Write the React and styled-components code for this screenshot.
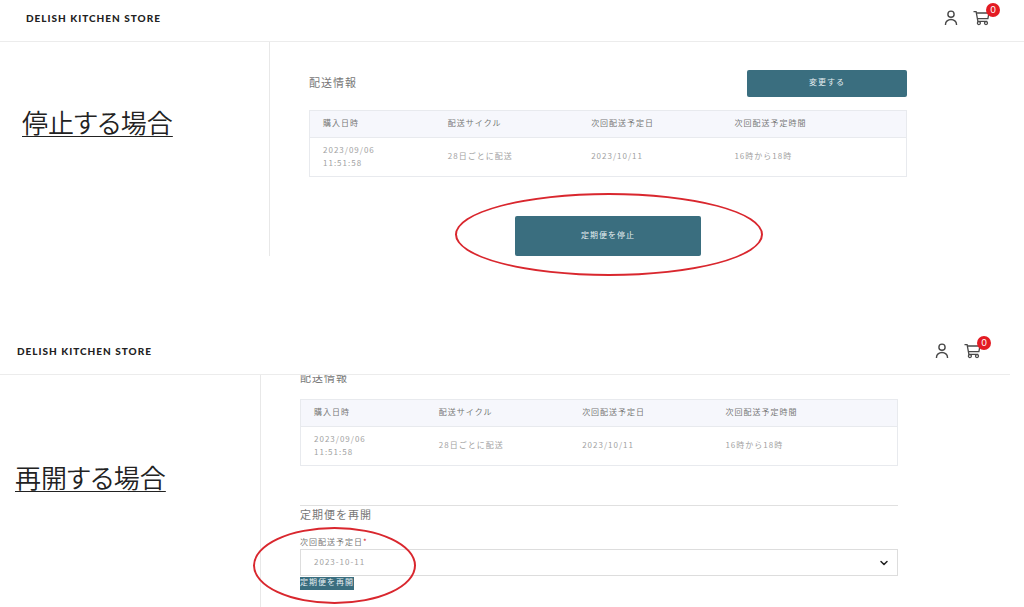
import React from 'react'
import styled, { createGlobalStyle } from 'styled-components'
import { ChevronDown } from 'lucide-react'

const GlobalStyle = createGlobalStyle`
  * {
    box-sizing: border-box;
  }

  body {
    margin: 0;
    background: #fff;
    color: #777;
    font-family: "Noto Sans CJK JP", sans-serif;
    font-size: 8px;
    letter-spacing: 1px;
  }
`

const Panel = styled.section`
  margin: ${({ $shifted }) => ($shifted ? '77px 14px 0 0' : '0')};
`

const Header = styled.header`
  display: flex;
  align-items: flex-start;
  justify-content: space-between;
  height: 42px;
  padding: ${({ $shifted }) => ($shifted ? '0 19px 0 17px' : '0 24px 0 26px')};
  border-bottom: 1px solid #ececec;
`

const Logo = styled.a`
  color: #222;
  font-family: Lato, sans-serif;
  font-size: 10px;
  font-weight: 900;
  line-height: 36px;
  text-decoration: none;
`

const Icons = styled.div`
  display: flex;
  gap: 14px;
  padding-top: 9px;
`

const IconButton = styled.button`
  position: relative;
  display: flex;
  width: ${({ $wide }) => ($wide ? '27px' : '16px')};
  padding: 0;
  border: 0;
  background: none;
  color: #484848;
`

const Badge = styled.span`
  position: absolute;
  top: -6px;
  right: 0;
  width: 14px;
  height: 14px;
  border-radius: 50%;
  background: #e31b23;
  color: #fff;
  font-family: Lato, sans-serif;
  font-size: 9px;
  letter-spacing: 0;
  line-height: 14px;
  text-align: center;
`

const Body = styled.div`
  display: flex;
`

const Side = styled.aside`
  flex: none;
  width: ${({ $shifted }) => ($shifted ? '261px' : '270px')};
  padding: ${({ $shifted }) => ($shifted ? '82px 0 0 15px' : '60px 0 0 22px')};
  border-right: 1px solid #e8e8e8;
`

const Caption = styled.h1`
  margin: 0;
  color: #222;
  font-size: 26px;
  font-weight: 350;
  font-feature-settings: "palt";
  letter-spacing: 0;
  line-height: 40px;
  text-decoration: underline;
  text-decoration-thickness: 1px;
  text-underline-offset: 3px;
`

const Main = styled.main`
  flex: 1;
  padding: ${({ $shifted }) => ($shifted ? '0 112px 18px 39px' : '28px 117px 0 39px')};
`

const TitleRow = styled.div`
  display: flex;
  align-items: flex-start;
  justify-content: space-between;
  margin-bottom: 13px;
`

/* the heading is scrolled halfway under the header */
const ScrolledRow = styled.div`
  display: flex;
  align-items: flex-end;
  height: 10px;
  margin-bottom: 14px;
  overflow: hidden;
`

const Title = styled.h2`
  margin: 0;
  color: #777;
  font-size: 11px;
  font-weight: 400;
  line-height: ${({ $tall }) => ($tall ? '24px' : '16px')};
`

const Button = styled.button`
  width: ${({ $size }) => ({ medium: '160px', large: '186px' })[$size] || 'auto'};
  height: ${({ $size }) => ({ medium: '27px', large: '40px' })[$size] || '13px'};
  padding: 0 0 3px;
  border: 0;
  border-radius: ${({ $size }) => ($size ? '2px' : '0')};
  background: #3a6e7f;
  color: #e4edef;
  font: inherit;
  letter-spacing: inherit;
  line-height: 10px;
`

const Table = styled.table`
  width: 100%;
  border: 1px solid #e8eaee;
  border-collapse: collapse;
  table-layout: fixed;
  text-align: left;

  th,
  td {
    padding: 0 13px 3px;
    line-height: 13px;
  }

  th {
    height: 27px;
    border-bottom: 1px solid #e8eaee;
    background: #f6f7fc;
    color: #777;
    font-weight: 400;
  }

  td {
    height: 39px;
    color: #a2a2a2;
  }
`

const Column = styled.col`
  width: ${({ $width }) => $width};
`

const StopArea = styled.div`
  display: flex;
  justify-content: center;
  margin-top: 39px;
`

const Marked = styled.div`
  position: relative;
`

const Ellipse = styled.span`
  position: absolute;
  top: ${({ $top }) => $top};
  left: ${({ $left }) => $left};
  width: ${({ $width }) => $width};
  height: ${({ $height }) => $height};
  border: 2px solid #d9272e;
  border-radius: 50%;
  pointer-events: none;
`

const Restart = styled.form`
  margin-top: 39px;
  border-top: 1px solid #e0e0e0;
`

const Field = styled.div`
  position: relative;
  margin-top: 13px;
`

const Label = styled.label`
  display: block;
  line-height: 14px;

  span {
    color: #d9272e;
  }
`

const SelectBox = styled.div`
  display: grid;
  align-items: center;

  > * {
    grid-area: 1 / 1;
  }

  svg {
    justify-self: end;
    margin-right: 8px;
    color: #222;
    pointer-events: none;
  }
`

const Select = styled.select`
  width: 100%;
  height: 27px;
  padding: 0 13px 3px;
  border: 1px solid #ddd;
  border-radius: 0;
  appearance: none;
  background: #fff;
  color: #a2a2a2;
  font: inherit;
  letter-spacing: inherit;
`

function UserIcon() {
  return (
    <svg width="16" height="18" viewBox="0 0 16 18" fill="none" stroke="currentColor" strokeWidth="1.4">
      <circle cx="8" cy="5.2" r="3.1" />
      <path d="M2.5 16v-.8a5.5 4.7 0 0 1 11 0v.8" />
    </svg>
  )
}

function CartIcon() {
  return (
    <svg width="18" height="18" viewBox="0 0 18 18" fill="none" stroke="currentColor" strokeWidth="1.3">
      <path d="M.5 2.6h2.6l1.8 9.8h9.3" />
      <path d="M3.5 4h12.4l-1 5.6H4.5" />
      <circle cx="5.9" cy="14.1" r="1.5" />
      <circle cx="13" cy="14.1" r="1.5" />
    </svg>
  )
}

function StoreHeader({ shifted }) {
  return (
    <Header $shifted={shifted}>
      <Logo href="#">DELISH KITCHEN STORE</Logo>
      <Icons>
        <IconButton type="button" aria-label="アカウント">
          <UserIcon />
        </IconButton>
        <IconButton type="button" aria-label="カート" $wide>
          <CartIcon />
          <Badge>0</Badge>
        </IconButton>
      </Icons>
    </Header>
  )
}

function DeliveryTable() {
  return (
    <Table>
      <colgroup>
        <Column $width="21%" />
        <Column $width="24%" />
        <Column $width="24%" />
        <Column $width="31%" />
      </colgroup>
      <thead>
        <tr>
          <th>購入日時</th>
          <th>配送サイクル</th>
          <th>次回配送予定日</th>
          <th>次回配送予定時間</th>
        </tr>
      </thead>
      <tbody>
        <tr>
          <td>
            2023/09/06
            <br />
            11:51:58
          </td>
          <td>28日ごとに配送</td>
          <td>2023/10/11</td>
          <td>16時から18時</td>
        </tr>
      </tbody>
    </Table>
  )
}

function App() {
  return (
    <>
      <GlobalStyle />
      <Panel>
        <StoreHeader />
        <Body>
          <Side>
            <Caption>停止する場合</Caption>
          </Side>
          <Main>
            <TitleRow>
              <Title $tall>配送情報</Title>
              <Button type="button" $size="medium">変更する</Button>
            </TitleRow>
            <DeliveryTable />
            <StopArea>
              <Marked>
                <Button type="button" $size="large">定期便を停止</Button>
                <Ellipse $top="-23px" $left="-60px" $width="308px" $height="83px" />
              </Marked>
            </StopArea>
          </Main>
        </Body>
      </Panel>

      <Panel $shifted>
        <StoreHeader shifted />
        <Body>
          <Side $shifted>
            <Caption>再開する場合</Caption>
          </Side>
          <Main $shifted>
            <ScrolledRow>
              <Title>配送情報</Title>
            </ScrolledRow>
            <DeliveryTable />
            <Restart>
              <Title>定期便を再開</Title>
              <Field>
                <Label htmlFor="next-date">
                  次回配送予定日<span>*</span>
                </Label>
                <SelectBox>
                  <Select id="next-date" defaultValue="2023-10-11">
                    <option>2023-10-11</option>
                  </Select>
                  <ChevronDown size={12} strokeWidth={3} />
                </SelectBox>
                <Button type="button">定期便を再開</Button>
                <Ellipse $top="-8px" $left="-47px" $width="163px" $height="77px" />
              </Field>
            </Restart>
          </Main>
        </Body>
      </Panel>
    </>
  )
}

export default App
